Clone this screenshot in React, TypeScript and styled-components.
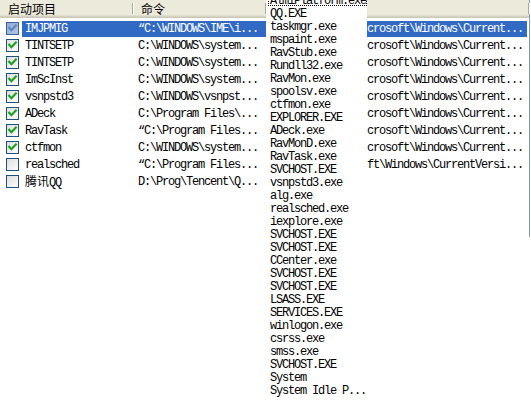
import React from 'react';
import styled, { createGlobalStyle } from 'styled-components';

const Global = createGlobalStyle`
  html, body { margin: 0; padding: 0; background: #ffffff; }
  body { width: 531px; height: 408px; overflow: hidden; }
`;

const MONO = `'Liberation Mono', 'Noto Sans CJK SC', monospace`;
const CJK = `'Noto Sans CJK SC', 'Liberation Sans', sans-serif`;

const Screen = styled.div`
  position: relative;
  width: 531px;
  height: 408px;
  overflow: hidden;
  background: #ffffff;
`;

const ListView = styled.div`
  width: 530px;
  height: 237px;
  box-sizing: border-box;
  border-right: 1px solid #7f9db9;
  display: flex;
  flex-direction: column;
`;

const Header = styled.div`
  display: flex;
  height: 18px;
  flex: none;
  background: #ebeadb;
  box-shadow: inset 0 -1px #cbc7b8, inset 0 -2px #d6d2c2, inset 0 -3px #e2decd;
`;

const HeaderCell = styled.div<{ $w?: number; $pad: number }>`
  position: relative;
  box-sizing: border-box;
  ${(p) => (p.$w ? `width: ${p.$w}px; flex: none;` : 'flex: 1;')}
  padding-left: ${(p) => p.$pad}px;
  font-family: ${CJK};
  font-size: 12px;
  line-height: 17px;
  color: #000;
  white-space: nowrap;
  &::after {
    content: '';
    position: absolute;
    right: 0;
    top: 3px;
    width: 1px;
    height: 11px;
    background: #aca899;
    box-shadow: 1px 0 #ffffff;
  }
`;

const Rows = styled.div`
  display: flex;
  flex-direction: column;
  padding-top: 2px;
`;

const Row = styled.div`
  display: flex;
  align-items: center;
  height: 17px;
`;

const CheckCell = styled.div`
  width: 22px;
  flex: none;
  box-sizing: border-box;
  padding-left: 6px;
  display: flex;
  align-items: center;
`;

const Cells = styled.div<{ $selected?: boolean }>`
  flex: 1;
  display: flex;
  align-items: center;
  height: 16px;
  margin-right: 2px;
  background: ${(p) => (p.$selected ? '#316ac5' : 'transparent')};
  color: ${(p) => (p.$selected ? '#ffffff' : '#000000')};
`;

const Cell = styled.div<{ $w?: number; $pad: number }>`
  box-sizing: border-box;
  ${(p) => (p.$w ? `width: ${p.$w}px; flex: none;` : 'flex: 1;')}
  padding-left: ${(p) => p.$pad}px;
  font-family: ${MONO};
  font-size: 12px;
  letter-spacing: -1.2px;
  line-height: 16px;
  white-space: nowrap;
  overflow: hidden;
`;

const Cjk = styled.span`
  font-family: ${CJK};
  letter-spacing: 0;
  font-size: 12px;
`;

const ProcList = styled.div`
  position: absolute;
  left: 266px;
  top: -7px;
  bottom: 0;
  width: 101px;
  background: #ffffff;
  display: flex;
  flex-direction: column;
  padding-left: 2px;
  box-sizing: border-box;
`;

const ProcItem = styled.div<{ $focus?: boolean }>`
  flex: none;
  height: 13px;
  line-height: 13px;
  padding: 2px 0 0 2px;
  box-sizing: border-box;
  font-family: ${MONO};
  font-size: 12px;
  letter-spacing: -1.2px;
  color: #000;
  white-space: nowrap;
  outline: ${(p) => (p.$focus ? '1px dotted #000' : 'none')};
  outline-offset: -1px;
`;

const CheckBox: React.FC<{ checked: boolean; selected?: boolean }> = ({ checked, selected }) => {
  const border = selected ? '#3a62a0' : '#1c5180';
  const c1 = selected ? '#8faad4' : '#dcdcd7';
  const c2 = selected ? '#b4c6e6' : '#ffffff';
  const mark = selected ? '#5f86b8' : '#21a121';
  const gid = selected ? 'cbSel' : 'cbNorm';
  return (
    <svg width="13" height="13" viewBox="0 0 13 13">
      <defs>
        <linearGradient id={gid} x1="0" y1="0" x2="1" y2="1">
          <stop offset="0" stopColor={c1} />
          <stop offset="1" stopColor={c2} />
        </linearGradient>
      </defs>
      <rect x="0.5" y="0.5" width="12" height="12" fill={`url(#${gid})`} stroke={border} />
      {checked && (
        <path d="M3.2 5.8 L5.4 8.2 L9.8 3.6" fill="none" stroke={mark} strokeWidth="2.2" strokeLinecap="square" />
      )}
    </svg>
  );
};

type Item = { name: React.ReactNode; cmd: string; loc: string; checked: boolean; selected?: boolean };

const LOC = 'crosoft\\Windows\\Current...';

const items: Item[] = [
  { name: 'IMJPMIG', cmd: '“C:\\WINDOWS\\IME\\i...', loc: LOC, checked: true, selected: true },
  { name: 'TINTSETP', cmd: 'C:\\WINDOWS\\system...', loc: LOC, checked: true },
  { name: 'TINTSETP', cmd: 'C:\\WINDOWS\\system...', loc: LOC, checked: true },
  { name: 'ImScInst', cmd: 'C:\\WINDOWS\\system...', loc: LOC, checked: true },
  { name: 'vsnpstd3', cmd: 'C:\\WINDOWS\\vsnpst...', loc: LOC, checked: true },
  { name: 'ADeck', cmd: 'C:\\Program Files\\...', loc: LOC, checked: true },
  { name: 'RavTask', cmd: '“C:\\Program Files...', loc: LOC, checked: true },
  { name: 'ctfmon', cmd: 'C:\\WINDOWS\\system...', loc: LOC, checked: true },
  { name: 'realsched', cmd: '“C:\\Program Files...', loc: 'ft\\Windows\\CurrentVersi...', checked: false },
  { name: <><Cjk>腾讯</Cjk>QQ</>, cmd: 'D:\\Prog\\Tencent\\Q...', loc: '', checked: false },
];

const procs = [
  'AlmiPlatform.exe',
  'QQ.EXE',
  'taskmgr.exe',
  'mspaint.exe',
  'RavStub.exe',
  'Rundll32.exe',
  'RavMon.exe',
  'spoolsv.exe',
  'ctfmon.exe',
  'EXPLORER.EXE',
  'ADeck.exe',
  'RavMonD.exe',
  'RavTask.exe',
  'SVCHOST.EXE',
  'vsnpstd3.exe',
  'alg.exe',
  'realsched.exe',
  'iexplore.exe',
  'SVCHOST.EXE',
  'SVCHOST.EXE',
  'CCenter.exe',
  'SVCHOST.EXE',
  'SVCHOST.EXE',
  'LSASS.EXE',
  'SERVICES.EXE',
  'winlogon.exe',
  'csrss.exe',
  'smss.exe',
  'SVCHOST.EXE',
  'System',
  'System Idle P...',
];

export default function App() {
  return (
    <Screen>
      <Global />
      <ListView>
        <Header>
          <HeaderCell $w={133} $pad={8}>启动项目</HeaderCell>
          <HeaderCell $w={133} $pad={8}>命令</HeaderCell>
          <HeaderCell $pad={8} />
        </Header>
        <Rows>
          {items.map((it, i) => (
            <Row key={i}>
              <CheckCell>
                <CheckBox checked={it.checked} selected={it.selected} />
              </CheckCell>
              <Cells $selected={it.selected}>
                <Cell $w={111} $pad={3}>{it.name}</Cell>
                <Cell $w={133} $pad={5}>{it.cmd}</Cell>
                <Cell $pad={101}>{it.loc}</Cell>
              </Cells>
            </Row>
          ))}
        </Rows>
      </ListView>
      <ProcList>
        {procs.map((p, i) => (
          <ProcItem key={i} $focus={i === 0}>{p}</ProcItem>
        ))}
      </ProcList>
    </Screen>
  );
}
